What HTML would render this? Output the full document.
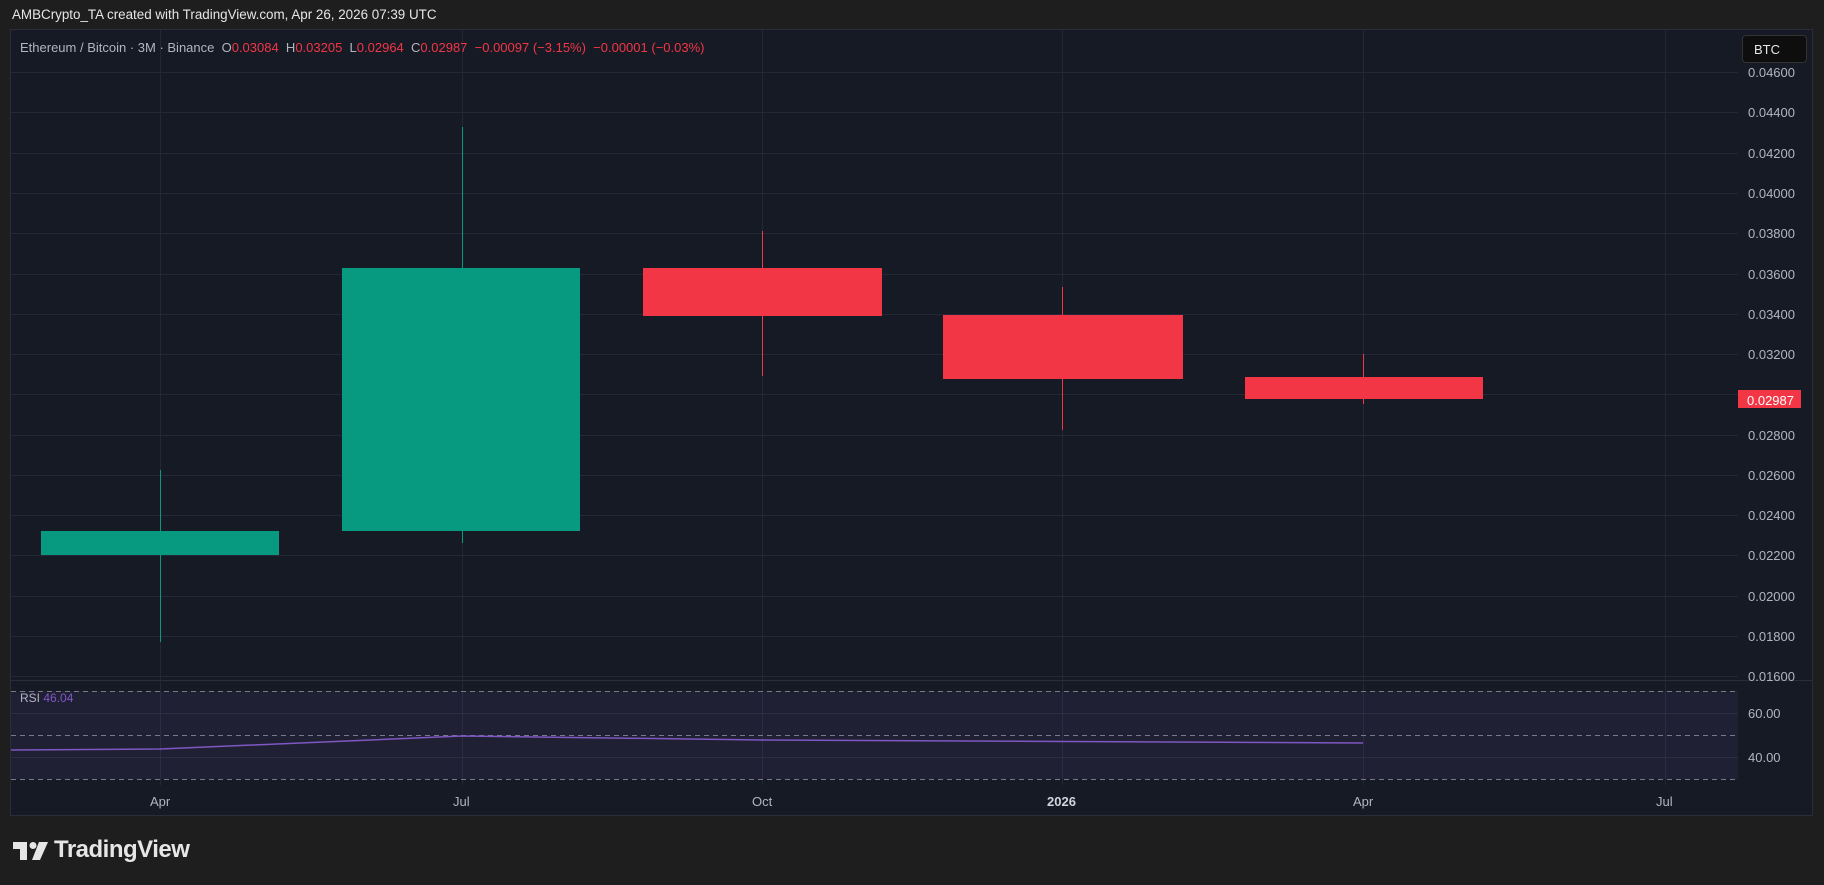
<!DOCTYPE html>
<html><head><meta charset="utf-8"><style>
*{margin:0;padding:0;box-sizing:border-box}
body{width:1824px;height:885px;background:#1e1e1e;font-family:"Liberation Sans",sans-serif;position:relative;overflow:hidden}
.t{position:absolute;white-space:nowrap}
</style></head><body>
<div class="t" style="left:12px;top:7px;font-size:13.4px;color:#e6e6e6">AMBCrypto_TA created with TradingView.com, Apr 26, 2026 07:39 UTC</div>
<div style="position:absolute;left:10px;top:29px;width:1803px;height:787px;background:#161a25;border:1px solid #2a2e39"></div>
<svg style="position:absolute;left:0;top:0" width="1824" height="885">
<g stroke="#242836" stroke-width="1">
<line x1="11" x2="1738" y1="72.5" y2="72.5"/><line x1="11" x2="1738" y1="112.5" y2="112.5"/><line x1="11" x2="1738" y1="153.5" y2="153.5"/><line x1="11" x2="1738" y1="193.5" y2="193.5"/><line x1="11" x2="1738" y1="233.5" y2="233.5"/><line x1="11" x2="1738" y1="274.5" y2="274.5"/><line x1="11" x2="1738" y1="314.5" y2="314.5"/><line x1="11" x2="1738" y1="354.5" y2="354.5"/><line x1="11" x2="1738" y1="394.5" y2="394.5"/><line x1="11" x2="1738" y1="435.5" y2="435.5"/><line x1="11" x2="1738" y1="475.5" y2="475.5"/><line x1="11" x2="1738" y1="515.5" y2="515.5"/><line x1="11" x2="1738" y1="555.5" y2="555.5"/><line x1="11" x2="1738" y1="596.5" y2="596.5"/><line x1="11" x2="1738" y1="636.5" y2="636.5"/><line x1="11" x2="1738" y1="676.5" y2="676.5"/>
<line x1="160.5" x2="160.5" y1="30" y2="785"/><line x1="462.5" x2="462.5" y1="30" y2="785"/><line x1="762.5" x2="762.5" y1="30" y2="785"/><line x1="1062.5" x2="1062.5" y1="30" y2="785"/><line x1="1363.5" x2="1363.5" y1="30" y2="785"/><line x1="1665.5" x2="1665.5" y1="30" y2="785"/>
</g>
<line x1="11" x2="1812" y1="680.5" y2="680.5" stroke="#2a2e39"/>
<rect x="11" y="691" width="1727" height="88" fill="#7e57c2" fill-opacity="0.1"/>
<line x1="11" x2="1738" y1="713.5" y2="713.5" stroke="#2c2f3d"/><line x1="11" x2="1738" y1="757.5" y2="757.5" stroke="#2c2f3d"/>
<g stroke="#787b86" stroke-dasharray="5,4"><line x1="11" x2="1738" y1="691.5" y2="691.5"/><line x1="11" x2="1738" y1="735.5" y2="735.5"/><line x1="11" x2="1738" y1="779.5" y2="779.5"/></g>
<polyline points="11,750 160,749 462,736 762,740 1363,743" fill="none" stroke="#7e57c2" stroke-width="1.5"/>
<g fill="#089981" stroke="#089981">
<line x1="160.5" x2="160.5" y1="470" y2="642"/><rect x="41" y="531" width="238" height="24" stroke="none"/>
<line x1="462.5" x2="462.5" y1="127" y2="543"/><rect x="342" y="268" width="238" height="263" stroke="none"/>
</g>
<g fill="#f23645" stroke="#f23645">
<line x1="762.5" x2="762.5" y1="231" y2="376"/><rect x="643" y="268" width="239" height="48" stroke="none"/>
<line x1="1062.5" x2="1062.5" y1="287" y2="430"/><rect x="943" y="315" width="240" height="64" stroke="none"/>
<line x1="1363.5" x2="1363.5" y1="354" y2="404"/><rect x="1245" y="377" width="238" height="22" stroke="none"/>
</g>
</svg>
<div class="t" style="left:20px;top:40px;font-size:13px;color:#b2b5be">Ethereum / Bitcoin · 3M · Binance &nbsp;O<span style="color:#f23645">0.03084</span> &nbsp;H<span style="color:#f23645">0.03205</span> &nbsp;L<span style="color:#f23645">0.02964</span> &nbsp;C<span style="color:#f23645">0.02987 &nbsp;−0.00097 (−3.15%) &nbsp;−0.00001 (−0.03%)</span></div>
<div style="position:absolute;left:1742px;top:35px;width:65px;height:28px;background:#0e0e0e;border:1px solid #333;border-radius:4px;color:#e6e6e6;font-size:13px;padding:6px 0 0 11px">BTC</div>
<div style="position:absolute;left:1748px;top:0;font-size:13px;color:#b2b5be;line-height:1">
<div class="t" style="top:66px">0.04600</div><div class="t" style="top:106px">0.04400</div><div class="t" style="top:147px">0.04200</div><div class="t" style="top:187px">0.04000</div><div class="t" style="top:227px">0.03800</div><div class="t" style="top:268px">0.03600</div><div class="t" style="top:308px">0.03400</div><div class="t" style="top:348px">0.03200</div><div class="t" style="top:429px">0.02800</div><div class="t" style="top:469px">0.02600</div><div class="t" style="top:509px">0.02400</div><div class="t" style="top:549px">0.02200</div><div class="t" style="top:590px">0.02000</div><div class="t" style="top:630px">0.01800</div><div class="t" style="top:670px">0.01600</div>
<div class="t" style="top:707px">60.00</div><div class="t" style="top:751px">40.00</div>
</div>
<div style="position:absolute;left:1738px;top:390px;width:63px;height:18px;background:#f23645;color:#fff;font-size:13px;padding:3px 0 0 9px">0.02987</div>
<div class="t" style="left:20px;top:691px;font-size:12px;color:#b2b5be">RSI <span style="color:#7e57c2">46.04</span></div>
<div style="position:absolute;top:794px;font-size:13px;color:#b2b5be">
<div class="t" style="left:150px">Apr</div><div class="t" style="left:453px">Jul</div><div class="t" style="left:752px">Oct</div><div class="t" style="left:1047px;font-weight:bold;color:#d1d4dc">2026</div><div class="t" style="left:1353px">Apr</div><div class="t" style="left:1656px">Jul</div>
</div>
<svg style="position:absolute;left:13px;top:842px" width="36" height="18" viewBox="0 0 36 18">
<path d="M0 0H14V18H7V7H0Z" fill="#e6e6e6"/><circle cx="20" cy="3.5" r="3.5" fill="#e6e6e6"/><path d="M26 0H35L27 18H19Z" fill="#e6e6e6"/>
</svg>
<div class="t" style="left:54px;top:836px;font-size:24px;color:#e6e6e6;font-weight:bold;letter-spacing:-0.5px">TradingView</div>
</body></html>
